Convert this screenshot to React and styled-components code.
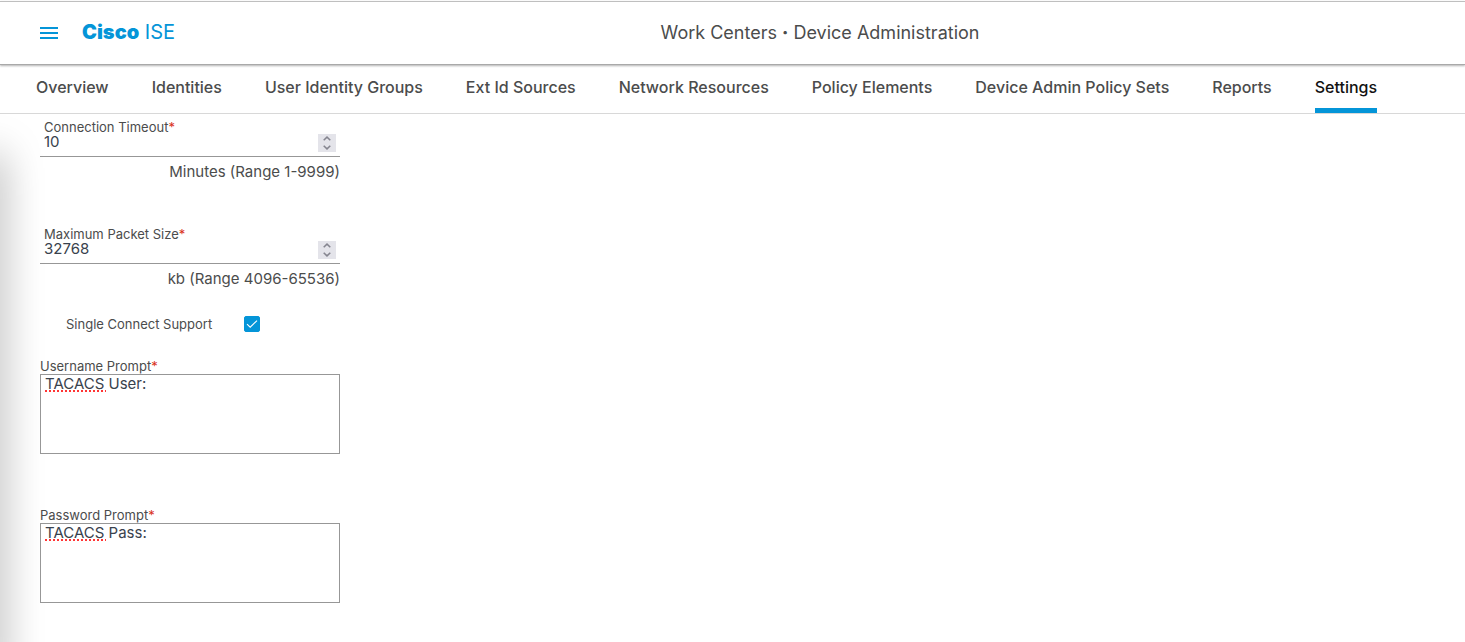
import React, { useState } from "react";
import styled, { createGlobalStyle } from "styled-components";

const GlobalStyle = createGlobalStyle`
  * { box-sizing: border-box; }
  body { margin: 0; background: #fff; color: #4b4c4c; font-family: Inter, "Open Sans", sans-serif; }
  button, input, textarea { font: inherit; }
`;

const Page = styled.div`
  display: flex;
  flex-direction: column;
  min-height: 100vh;
  padding-top: 1px;
`;

const Header = styled.header`
  position: relative;
  z-index: 1;
  display: flex;
  align-items: center;
  height: 64px;
  padding-left: 40px;
  border-top: 1px solid #bfbfbf;
  border-bottom: 1px solid #a9a9a9;
  box-shadow: 0 1px 2px rgba(0, 0, 0, 0.3);
`;

const MenuButton = styled.button`
  display: flex;
  padding: 0;
  margin-right: 24px;
  border: 0;
  background: none;
  color: #0495d8;
  cursor: pointer;
`;

const Brand = styled.a`
  padding-bottom: 2px;
  color: #0495d8;
  font-size: 20px;
  line-height: 24px;
  font-weight: 400;
  text-decoration: none;
  white-space: nowrap;
  strong { font-weight: 900; }
`;

const Title = styled.h1`
  flex: 1;
  margin: 0;
  font-size: 18px;
  line-height: 24px;
  font-weight: 400;
  text-align: center;
  b { font-weight: 800; }
`;

const Tabs = styled.nav`
  display: flex;
  gap: 43px;
  height: 49px;
  padding: 0 36px;
  border-bottom: 1px solid #d8d8d8;
`;

const Tab = styled.a`
  padding-top: 10px;
  border-bottom: 5px solid ${(p) => (p.$active ? "#0495d8" : "transparent")};
  color: ${(p) => (p.$active ? "#121212" : "#4b4c4c")};
  font-size: 16px;
  line-height: 24px;
  font-weight: 500;
  text-decoration: none;
  white-space: nowrap;
`;

const Content = styled.main`
  position: relative;
  flex: 1;
  overflow: hidden;
  padding: 6px 40px 39px;
  &::before {
    content: "";
    position: absolute;
    top: 40px;
    bottom: -40px;
    left: -20px;
    width: 20px;
    box-shadow: 0 0 40px rgba(0, 0, 0, 0.4);
  }
`;

const Form = styled.form`
  display: flex;
  flex-direction: column;
  max-width: 300px;
`;

const Label = styled.label`
  display: block;
  font-size: 13px;
  line-height: 16px;
`;

const Star = styled.span`
  color: #d9301a;
`;

const NumberField = styled.div`
  height: 107px;
  ${Label} {
    padding-left: 4px;
    line-height: 14px;
  }
`;

const NumberRow = styled.div`
  display: flex;
  align-items: flex-start;
  height: 23px;
  padding-right: 4px;
  border-bottom: 1px solid #979797;
`;

const NumberInput = styled.input`
  flex: 1;
  min-width: 0;
  height: 16px;
  padding: 0 4px;
  border: 0;
  outline: 0;
  background: none;
  color: #39424d;
  font-size: 15px;
  line-height: 16px;
  appearance: textfield;
  &::-webkit-inner-spin-button { appearance: none; margin: 0; }
`;

const Spinner = styled.div`
  display: flex;
  flex-direction: column;
  width: 18px;
  height: 18px;
  background: #e4e4ea;
  color: #85858f;
`;

const StepButton = styled.button`
  display: flex;
  align-items: center;
  justify-content: center;
  height: 9px;
  padding: 0;
  border: 0;
  background: none;
  color: inherit;
`;

const Hint = styled.p`
  margin: 5px 0 0;
  font-size: 15px;
  line-height: 20px;
  text-align: right;
`;

const CheckRow = styled.div`
  display: flex;
  align-items: center;
  justify-content: space-between;
  height: 20px;
  margin: -20px 80px 24px 26px;
`;

const CheckBox = styled.span`
  display: grid;
  width: 16px;
  height: 16px;
  input, svg { grid-area: 1 / 1; }
  input {
    width: 16px;
    height: 16px;
    margin: 0;
    appearance: none;
    border: 1px solid #0495d8;
    border-radius: 2px;
    background: #fff;
  }
  input:checked { background: #0495d8; }
  svg { pointer-events: none; }
`;

const PromptField = styled.div`
  margin-bottom: 53px;
  &:last-child { margin-bottom: 0; }
`;

const PromptBox = styled.div`
  position: relative;
  display: flex;
`;

const TextArea = styled.textarea`
  width: 100%;
  height: 80px;
  padding: 0 4px;
  border: 1px solid #979797;
  border-radius: 0;
  outline: 0;
  resize: none;
  background: #fff;
  color: #39424d;
  font-size: 15px;
  line-height: 18px;
`;

const SpellingMark = styled.span`
  position: absolute;
  top: 16px;
  left: 5px;
  width: 61px;
  height: 2px;
  background: repeating-linear-gradient(90deg, #ff3535 0 2px, transparent 2px 4px);
  pointer-events: none;
`;

const tabs = [
  "Overview",
  "Identities",
  "User Identity Groups",
  "Ext Id Sources",
  "Network Resources",
  "Policy Elements",
  "Device Admin Policy Sets",
  "Reports",
  "Settings",
];

function Chevron({ up }) {
  return (
    <svg width="8" height="5" viewBox="0 0 8 5" fill="none" stroke="currentColor" strokeWidth="1.5" aria-hidden="true">
      <path d={up ? "M.7 4.2 4 1.1l3.3 3.1" : "M.7.8 4 3.9 7.3.8"} />
    </svg>
  );
}

function NumberSetting({ id, label, initial, min, max, hint }) {
  const [value, setValue] = useState(initial);
  const step = (n) => setValue((v) => Math.min(max, Math.max(min, Number(v) + n)));
  return (
    <NumberField>
      <Label htmlFor={id}>{label}<Star>*</Star></Label>
      <NumberRow>
        <NumberInput id={id} type="number" min={min} max={max} value={value} onChange={(e) => setValue(e.target.value)} />
        <Spinner>
          <StepButton type="button" aria-label={`Increase ${label}`} onClick={() => step(1)}><Chevron up /></StepButton>
          <StepButton type="button" aria-label={`Decrease ${label}`} onClick={() => step(-1)}><Chevron /></StepButton>
        </Spinner>
      </NumberRow>
      <Hint>{hint}</Hint>
    </NumberField>
  );
}

function PromptSetting({ id, label, initial }) {
  const [value, setValue] = useState(initial);
  return (
    <PromptField>
      <Label htmlFor={id}>{label}<Star>*</Star></Label>
      <PromptBox>
        <TextArea id={id} value={value} spellCheck={false} onChange={(e) => setValue(e.target.value)} />
        {value.startsWith("TACACS") && <SpellingMark />}
      </PromptBox>
    </PromptField>
  );
}

export default function App() {
  return (
    <>
      <GlobalStyle />
      <Page>
        <Header>
          <MenuButton type="button" aria-label="Menu">
            <svg width="18" height="12" viewBox="0 0 18 12" fill="currentColor" aria-hidden="true">
              <path d="M0 0h18v2H0zM0 5h18v2H0zM0 10h18v2H0z" />
            </svg>
          </MenuButton>
          <Brand href="#home"><strong>Cisco</strong> ISE</Brand>
          <Title>Work Centers <b>·</b> Device Administration</Title>
        </Header>
        <Tabs>
          {tabs.map((name) => (
            <Tab key={name} href="#tab" $active={name === "Settings"}>{name}</Tab>
          ))}
        </Tabs>
        <Content>
          <Form>
            <NumberSetting id="timeout" label="Connection Timeout" initial={10} min={1} max={9999} hint="Minutes (Range 1-9999)" />
            <NumberSetting id="packet" label="Maximum Packet Size" initial={32768} min={4096} max={65536} hint="kb (Range 4096-65536)" />
            <CheckRow>
              <Label htmlFor="single">Single Connect Support</Label>
              <CheckBox>
                <input id="single" type="checkbox" defaultChecked />
                <svg width="16" height="16" viewBox="0 0 16 16" fill="none" stroke="#fff" strokeWidth="1.1" aria-hidden="true">
                  <path d="m3 8.2 3.2 3L13 4.6" />
                </svg>
              </CheckBox>
            </CheckRow>
            <PromptSetting id="username" label="Username Prompt" initial="TACACS User:" />
            <PromptSetting id="password" label="Password Prompt" initial="TACACS Pass:" />
          </Form>
        </Content>
      </Page>
    </>
  );
}
